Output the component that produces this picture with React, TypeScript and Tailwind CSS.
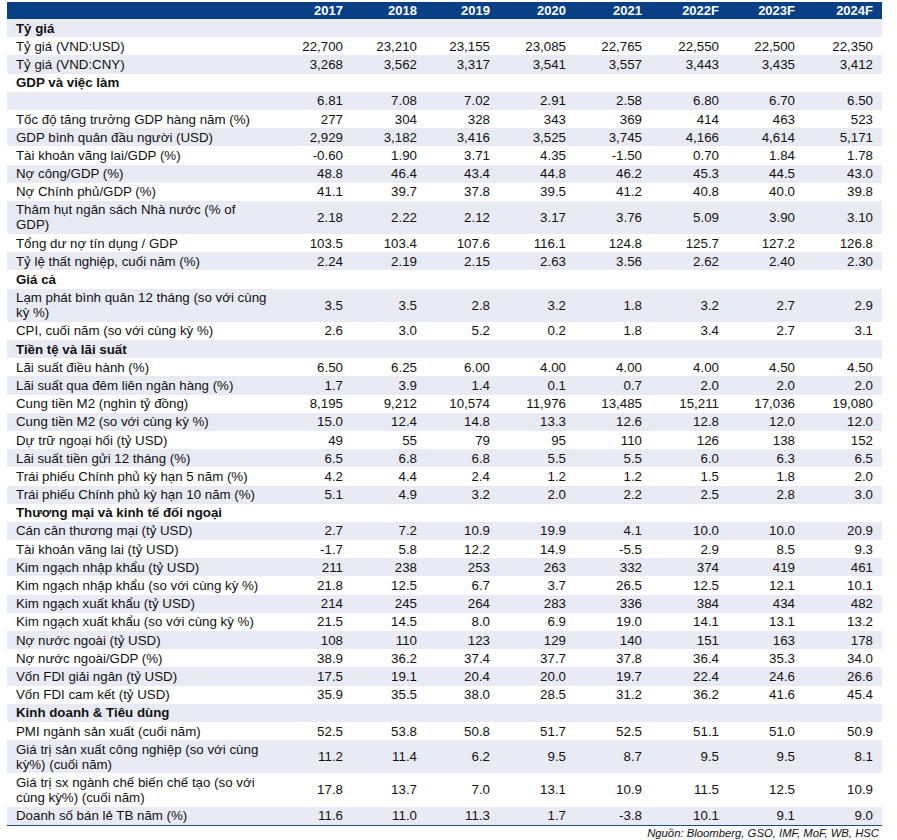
import React from 'react'

const YEARS = ['2017', '2018', '2019', '2020', '2021', '2022F', '2023F', '2024F']

type Row =
  | { kind: 'section'; label: string }
  | { kind: 'data'; label: React.ReactNode; values: string[]; tall?: boolean }

const sec = (label: string): Row => ({ kind: 'section', label })
const row = (label: React.ReactNode, v: string, tall = false): Row => ({
  kind: 'data',
  label,
  values: v.split(' '),
  tall,
})

const ROWS: Row[] = [
  sec('Tỷ giá'),
  row('Tỷ giá (VND:USD)', '22,700 23,210 23,155 23,085 22,765 22,550 22,500 22,350'),
  row('Tỷ giá (VND:CNY)', '3,268 3,562 3,317 3,541 3,557 3,443 3,435 3,412'),
  sec('GDP và việc làm'),
  row('', '6.81 7.08 7.02 2.91 2.58 6.80 6.70 6.50'),
  row('Tốc độ tăng trưởng GDP hàng năm (%)', '277 304 328 343 369 414 463 523'),
  row('GDP bình quân đầu người (USD)', '2,929 3,182 3,416 3,525 3,745 4,166 4,614 5,171'),
  row('Tài khoản vãng lai/GDP (%)', '-0.60 1.90 3.71 4.35 -1.50 0.70 1.84 1.78'),
  row('Nợ công/GDP (%)', '48.8 46.4 43.4 44.8 46.2 45.3 44.5 43.0'),
  row('Nợ Chính phủ/GDP (%)', '41.1 39.7 37.8 39.5 41.2 40.8 40.0 39.8'),
  row(<>Thâm hụt ngân sách Nhà nước (% of<br />GDP)</>, '2.18 2.22 2.12 3.17 3.76 5.09 3.90 3.10', true),
  row('Tổng dư nợ tín dụng / GDP', '103.5 103.4 107.6 116.1 124.8 125.7 127.2 126.8'),
  row('Tỷ lệ thất nghiệp, cuối năm (%)', '2.24 2.19 2.15 2.63 3.56 2.62 2.40 2.30'),
  sec('Giá cả'),
  row(<>Lạm phát bình quân 12 tháng (so với cùng<br />kỳ %)</>, '3.5 3.5 2.8 3.2 1.8 3.2 2.7 2.9', true),
  row('CPI, cuối năm (so với cùng kỳ %)', '2.6 3.0 5.2 0.2 1.8 3.4 2.7 3.1'),
  sec('Tiền tệ và lãi suất'),
  row('Lãi suất điều hành (%)', '6.50 6.25 6.00 4.00 4.00 4.00 4.50 4.50'),
  row('Lãi suất qua đêm liên ngân hàng (%)', '1.7 3.9 1.4 0.1 0.7 2.0 2.0 2.0'),
  row('Cung tiền M2 (nghìn tỷ đồng)', '8,195 9,212 10,574 11,976 13,485 15,211 17,036 19,080'),
  row('Cung tiền M2 (so với cùng kỳ %)', '15.0 12.4 14.8 13.3 12.6 12.8 12.0 12.0'),
  row('Dự trữ ngoại hối (tỷ USD)', '49 55 79 95 110 126 138 152'),
  row('Lãi suất tiền gửi 12 tháng (%)', '6.5 6.8 6.8 5.5 5.5 6.0 6.3 6.5'),
  row('Trái phiếu Chính phủ kỳ hạn 5 năm (%)', '4.2 4.4 2.4 1.2 1.2 1.5 1.8 2.0'),
  row('Trái phiếu Chính phủ kỳ hạn 10 năm (%)', '5.1 4.9 3.2 2.0 2.2 2.5 2.8 3.0'),
  sec('Thương mại và kinh tế đối ngoại'),
  row('Cán cân thương mại (tỷ USD)', '2.7 7.2 10.9 19.9 4.1 10.0 10.0 20.9'),
  row('Tài khoản vãng lai (tỷ USD)', '-1.7 5.8 12.2 14.9 -5.5 2.9 8.5 9.3'),
  row('Kim ngạch nhập khẩu (tỷ USD)', '211 238 253 263 332 374 419 461'),
  row('Kim ngạch nhập khẩu (so với cùng kỳ %)', '21.8 12.5 6.7 3.7 26.5 12.5 12.1 10.1'),
  row('Kim ngạch xuất khẩu (tỷ USD)', '214 245 264 283 336 384 434 482'),
  row('Kim ngạch xuất khẩu (so với cùng kỳ %)', '21.5 14.5 8.0 6.9 19.0 14.1 13.1 13.2'),
  row('Nợ nước ngoài (tỷ USD)', '108 110 123 129 140 151 163 178'),
  row('Nợ nước ngoài/GDP (%)', '38.9 36.2 37.4 37.7 37.8 36.4 35.3 34.0'),
  row('Vốn FDI giải ngân (tỷ USD)', '17.5 19.1 20.4 20.0 19.7 22.4 24.6 26.6'),
  row('Vốn FDI cam kết (tỷ USD)', '35.9 35.5 38.0 28.5 31.2 36.2 41.6 45.4'),
  sec('Kinh doanh & Tiêu dùng'),
  row('PMI ngành sản xuất (cuối năm)', '52.5 53.8 50.8 51.7 52.5 51.1 51.0 50.9'),
  row(<>Giá trị sản xuất công nghiệp (so với cùng<br />kỳ%) (cuối năm)</>, '11.2 11.4 6.2 9.5 8.7 9.5 9.5 8.1', true),
  row(<>Giá trị sx ngành chế biến chế tạo (so với<br />cùng kỳ%) (cuối năm)</>, '17.8 13.7 7.0 13.1 10.9 11.5 12.5 10.9', true),
  row('Doanh số bán lẻ TB năm (%)', '11.6 11.0 11.3 1.7 -3.8 10.1 9.1 9.0'),
]

const GRID = 'grid grid-cols-[271px_74px_74px_73px_76px_76px_77px_76px_78px]'

export default function App() {
  return (
    <div className="min-h-[840px] bg-white pl-[7px] pt-[2px] font-['Liberation_Sans',Arial,sans-serif] text-[13.3px] text-[#111]">
      <div className="w-[875px]">
        {/* header */}
        <div className={`${GRID} h-[17px] bg-[#083f85] text-[13px] font-bold leading-[17px] text-white`}>
          <div />
          {YEARS.map((y) => (
            <div key={y} className="pr-[9px] text-right">{y}</div>
          ))}
        </div>

        {ROWS.map((r, i) => {
          const shade = i % 2 === 0 ? 'bg-[#e9ebf4]' : 'bg-white'
          if (r.kind === 'section') {
            return (
              <div key={i} className={`${shade} py-[1.6px] pl-[9px] font-bold leading-[15px]`}>
                {r.label}
              </div>
            )
          }
          return (
            <div key={i} className={`${GRID} ${shade} py-[1.6px] leading-[15px]`}>
              <div className="whitespace-nowrap pl-[9px]">{r.label}</div>
              {r.values.map((v, j) => (
                <div key={j} className="flex items-center justify-end pr-[9px]">{v}</div>
              ))}
            </div>
          )
        })}

        <div className="h-px bg-[#1d4d8f]" />
        <div className="pr-[3px] pt-[1px] text-right text-[11.3px] italic leading-[13px] text-[#111]">
          Nguồn: Bloomberg, GSO, IMF, MoF, WB, HSC
        </div>
      </div>
    </div>
  )
}
